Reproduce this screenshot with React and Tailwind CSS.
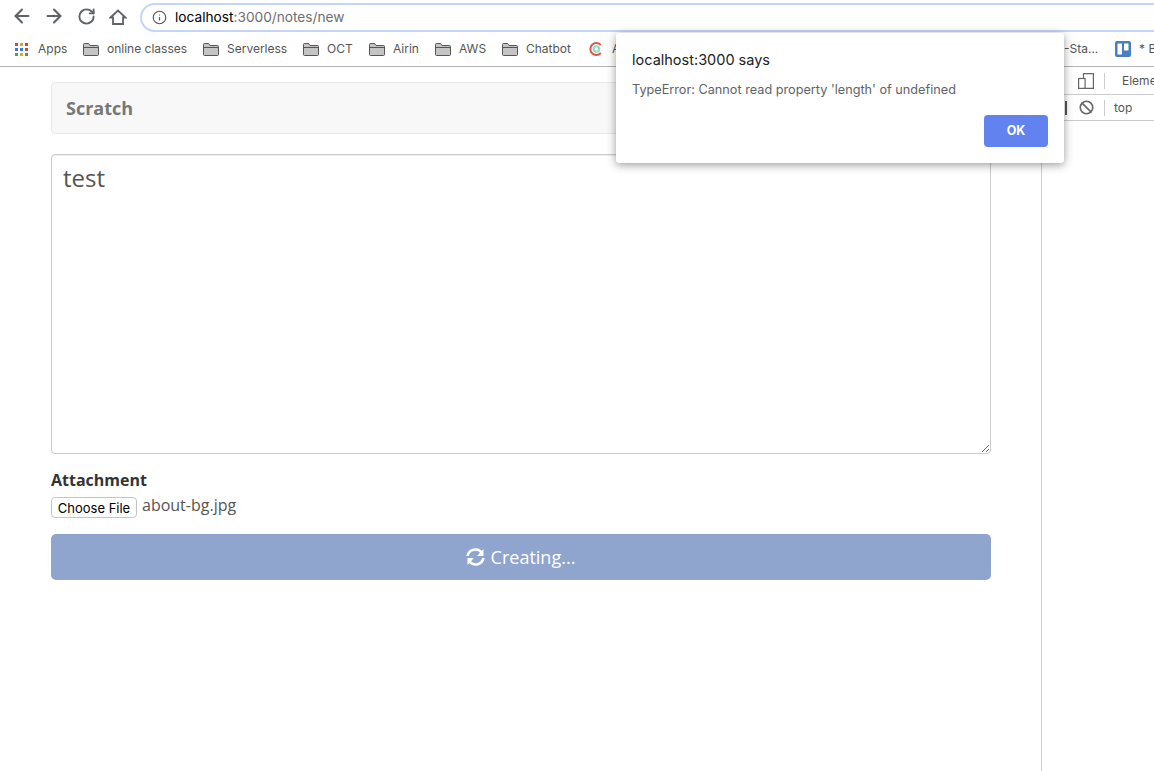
import { RotateCw, ArrowLeft, ArrowRight, Info, Ban } from 'lucide-react';

const sans = "font-['Inter','Liberation_Sans',sans-serif]";

function Folder() {
    return (
        <svg width="16" height="13" viewBox="0 0 16 13" className="shrink-0">
            <path d="M0.5 11.5V1.5Q0.5 0.5 1.5 0.5H5.5L7 2.5H14.5Q15.5 2.5 15.5 3.5V11.5Q15.5 12.5 14.5 12.5H1.5Q0.5 12.5 0.5 11.5Z" fill="#c4c4c4" stroke="#555" />
            <path d="M0.5 4.5H15.5" stroke="#555" />
        </svg>
    );
}

function AppsGrid() {
    const colors = ['#d9453a', '#e8a020', '#d9453a', '#3b78e7', '#3b78e7', '#d9453a', '#34a853', '#e8a020', '#34a853'];
    return (
        <div className="grid grid-cols-3 gap-[2px] w-[13px] shrink-0">
            {colors.map((c, i) => (
                <span key={i} className="w-[3px] h-[3px]" style={{ backgroundColor: c }} />
            ))}
        </div>
    );
}

function Bookmark({ label, className }) {
    return (
        <div className={`flex items-center gap-[8px] shrink-0 ${className}`}>
            <Folder />
            <span className="text-[12px] text-[#555]">{label}</span>
        </div>
    );
}

function Toolbar() {
    return (
        <div className="h-[32px] flex items-center bg-white overflow-hidden">
            <div className="flex items-center pl-[11px] gap-[10px] text-[#5f6368] shrink-0">
                <ArrowLeft size={22} strokeWidth={2.3} />
                <ArrowRight size={22} strokeWidth={2.3} />
                <RotateCw size={19} strokeWidth={2.4} className="mx-[1.5px]" />
                <svg width="18" height="18" viewBox="0 0 18 18" fill="none" stroke="#5f6368" strokeWidth="1.8" className="mt-[1px] ml-[2px]">
                    <path d="M1.5 9.5L9 2.5L16.5 9.5H14V16H4V9.5Z" strokeLinejoin="miter" />
                </svg>
            </div>
            <div className="ml-[13px] mt-[2px] h-[29px] w-[1100px] shrink-0 rounded-full border-2 border-[#c3d5f9] flex items-center pl-[10px]">
                <Info size={15} strokeWidth={1.8} className="text-[#555]" />
                <span className="ml-[8px] mt-[1px] text-[13.7px] text-black">localhost<span className="text-[#6e6e6e]">:3000/notes/new</span></span>
            </div>
        </div>
    );
}

function BookmarksBar() {
    return (
        <div className="h-[35px] flex items-center bg-white border-b border-[#b5b5b5] whitespace-nowrap">
            <div className="flex items-center pl-[15px] w-[83px] shrink-0">
                <AppsGrid />
                <span className="ml-[10px] text-[12px] text-[#555]">Apps</span>
            </div>
            <Bookmark label="online classes" className="w-[120px]" />
            <Bookmark label="Serverless" className="w-[100px]" />
            <Bookmark label="OCT" className="w-[66px]" />
            <Bookmark label="Airin" className="w-[66px]" />
            <Bookmark label="AWS" className="w-[67px]" />
            <Bookmark label="Chatbot" className="w-[87px]" />
            <svg width="14" height="14" viewBox="0 0 14 14" className="shrink-0">
                <path d="M11.8 3A6 6 0 1 0 11.8 11" fill="none" stroke="#e2534b" strokeWidth="2" />
                <circle cx="7.5" cy="7" r="2.8" fill="none" stroke="#8ee0bc" strokeWidth="2" />
            </svg>
            <span className="ml-[9px] w-[452px] shrink-0 text-[12px] text-[#555]">A</span>
            <span className="w-[51px] text-[12px] text-[#555] shrink-0">-Sta...</span>
            <svg width="16" height="16" viewBox="0 0 16 16" className="shrink-0">
                <rect width="16" height="16" rx="2" fill="#4a7ec2" />
                <rect x="2.5" y="2.5" width="4.5" height="11" rx="0.5" fill="#fff" />
                <rect x="9" y="2.5" width="4.5" height="7" rx="0.5" fill="#fff" />
            </svg>
            <span className="ml-[8px] text-[12px] text-[#555]">* B</span>
        </div>
    );
}

function NoteForm() {
    return (
        <main className="w-[1042px] h-[704px] shrink-0 border-r border-[#cfcfcf] pl-[51px] pr-[50px] pt-[15px] font-['Open_Sans',sans-serif]">
            <nav className="h-[52px] bg-[#f8f8f8] border border-[#e7e7e7] rounded flex items-center pl-[14px]">
                <span className="text-[18px] font-bold text-[#777]">Scratch</span>
            </nav>
            <form>
                <textarea
                    readOnly
                    value="test"
                    className="mt-[20px] block w-full h-[300px] border border-[#ccc] rounded pl-[11px] pr-3 py-[6px] text-[24px] leading-[34px] text-[#555] outline-none shadow-[inset_0_1px_1px_rgba(0,0,0,0.075)] resize-y"
                />
                <label className="block mt-[15px] text-[16px] leading-[22px] font-bold text-[#333]">Attachment</label>
                <div className="flex items-start mt-[5px] h-[32px]">
                    <button type="button" className={`w-[86px] h-[21px] mt-[1px] pt-[1px] bg-white border border-[#c4c4c4] rounded-[4px] text-[13px] text-black ${sans}`}>
                        Choose File
                    </button>
                    <span className="ml-[5px] text-[16px] leading-[22px] -mt-[2px] text-[#555]">about-bg.jpg</span>
                </div>
                <button type="button" className="mt-[6px] w-full h-[46px] bg-[#8fa5ce] rounded-[5px] flex items-center justify-center gap-[5px] pr-[2px] text-[18px] text-white">
                    <svg width="21" height="18" viewBox="0 0 21 18" fill="none" stroke="#fff" strokeWidth="2.6">
                        <path d="M2.5 8A8 8 0 0 1 16.5 4.5" />
                        <path d="M18.5 1V8H12Z" fill="#fff" stroke="none" />
                        <path d="M18.5 10A8 8 0 0 1 4.5 13.5" />
                        <path d="M2.5 17V10H9Z" fill="#fff" stroke="none" />
                    </svg>
                    Creating...
                </button>
            </form>
        </main>
    );
}

function DevTools() {
    return (
        <aside className={`flex-1 min-w-0 overflow-hidden whitespace-nowrap text-[12px] text-[#555] ${sans}`}>
            <div className="h-[28px] flex items-center border-b border-[#ccc] pl-[36px]">
                <svg width="16" height="16" viewBox="0 0 16 16" fill="none" stroke="#666" strokeWidth="1.2" className="shrink-0">
                    <path d="M5.5 5.5V0.6H15.4V15.4H5.5" />
                    <rect x="0.6" y="5.5" width="6.5" height="9.9" />
                </svg>
                <span className="ml-[10px] w-px h-[16px] bg-[#ccc] shrink-0" />
                <span className="ml-[17px] w-[40px] overflow-hidden shrink-0">Elements</span>
            </div>
            <div className="h-[26px] flex items-center border-b border-[#ccc]">
                <span className="ml-[23px] w-[2px] h-[14px] bg-[#555] shrink-0" />
                <Ban size={15} strokeWidth={2.6} className="ml-[12px] text-[#666] shrink-0" />
                <span className="ml-[10px] w-px h-[16px] bg-[#ccc] shrink-0" />
                <span className="ml-[9px]">top</span>
            </div>
        </aside>
    );
}

function AlertDialog() {
    return (
        <div className={`absolute left-[616px] top-[33px] w-[448px] h-[130px] bg-white rounded-[3px] shadow-[0_2px_10px_rgba(0,0,0,0.4)] px-[16px] pt-[18px] ${sans}`}>
            <p className="text-[14.5px] leading-[18px] text-[#202124]">localhost:3000 says</p>
            <p className="mt-[13px] text-[12.7px] leading-[16px] text-[#5f6368]">TypeError: Cannot read property 'length' of undefined</p>
            <div className="flex justify-end mt-[17px]">
                <button type="button" className="w-[64px] h-[32px] bg-[#6282ef] rounded-[4px] text-[12.5px] font-bold text-white">OK</button>
            </div>
        </div>
    );
}

export default function App() {
    return (
        <div className="relative w-[1154px] h-[771px] overflow-hidden bg-white">
            <div className={sans}>
                <Toolbar />
                <BookmarksBar />
            </div>
            <div className="flex">
                <NoteForm />
                <DevTools />
            </div>
            <AlertDialog />
        </div>
    );
}
